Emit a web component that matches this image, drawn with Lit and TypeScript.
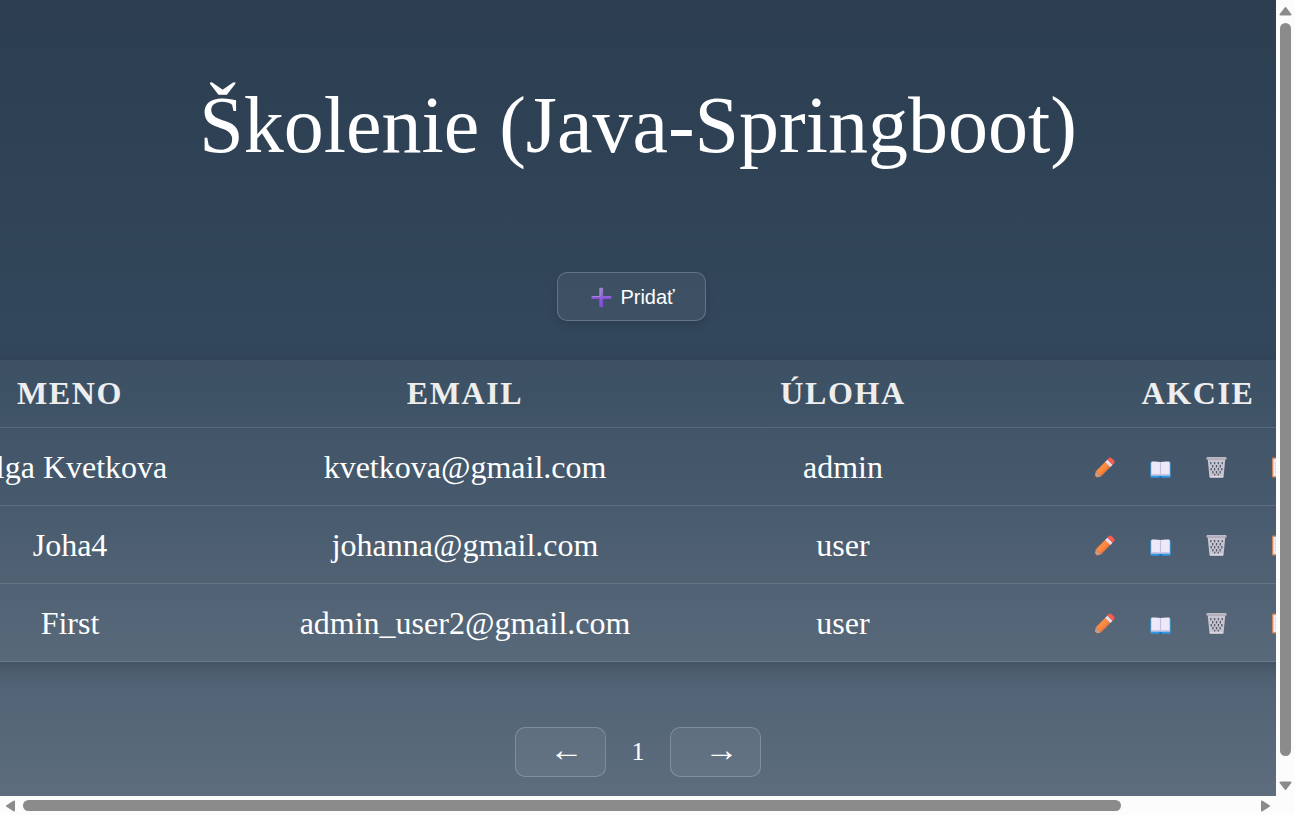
import { LitElement, html, css, svg } from "lit";
import { customElement, property } from "lit/decorators.js";

interface Person {
  name: string;
  email: string;
  role: string;
}

const people: Person[] = [
  { name: "Olga Kvetkova", email: "kvetkova@gmail.com", role: "admin" },
  { name: "Joha4", email: "johanna@gmail.com", role: "user" },
  { name: "First", email: "admin_user2@gmail.com", role: "user" },
];

const plus = svg`
  <defs><linearGradient id="p" x1="0" y1="0" x2="0" y2="1">
    <stop offset="0" stop-color="#9a86c4"/><stop offset="0.45" stop-color="#8f63d6"/><stop offset="1" stop-color="#7f4bd0"/>
  </linearGradient></defs>
  <path d="M9 .7h2.400q.7 0 .7.7v7.500h7.600q.7 0 .7.7v1.600q0 .7-.7.7h-7.600v7.700q0 .7-.7.7H9q-.7 0-.7-.7V11.900H1.200q-.7 0-.7-.7V9.600q0-.7.7-.7h7.100V1.400q0-.7.7-.7Z" fill="url(#p)"/>
  <path d="M9.200 1.500v8H1.500" fill="none" stroke="#a995d2" stroke-width=".7"/>
  <path d="M1.500 11.300h7.300M12 11.300h7.500M11.500 12v7" fill="none" stroke="#7f45dd" stroke-width=".9"/>`;

const pencil = svg`
  <defs><linearGradient id="w" x1="0" y1="0" x2="1" y2="1">
    <stop offset="0.25" stop-color="#f58a4c"/><stop offset="0.5" stop-color="#ff8b3c"/><stop offset="0.75" stop-color="#d8683f"/>
  </linearGradient></defs>
  <path d="M1.800 14.200 12 4l5.200 5.200L7 19.400Z" fill="url(#w)"/>
  <path d="M1.800 14.200 7 19.400 1.200 20.800q-.9 0-.6-1Z" fill="#c99a86"/>
  <path d="m.9 18.600 2 1.700-1.700.5q-1 0-.7-1Z" fill="#5d4148"/>
  <path d="m11.200 4.900 2.300-2.300 5.200 5.200-2.300 2.300Z" fill="#e3dcec"/>
  <path d="m13.400 2.600 1.900-1.900q1.100-.7 2.100.3l2.800 2.800q.9 1.100 0 2.100L18.400 7.700Z" fill="#ff5a4e"/>`;

const book = svg`
  <path d="M.5 5.500h20v14q0 1-1 1h-7.800l-1.200.6-1.200-.6H1.500q-1 0-1-1Z" fill="#3fb2f5"/>
  <path d="M1 19.300h19v1.100H1Z" fill="#248de4"/>
  <path d="M9.300 19.300h2.400v1.700H9.300Z" fill="#2263ae"/>
  <path d="M1.300 5.300q0-.7.8-.7 5-.4 8.400.5 3.400-.9 8.400-.5.800 0 .8.700V18.200H1.300Z" fill="#eee9f8"/>
  <path d="M1.300 17.200h8.200l1 .9 1-.9h8.200v1.400H1.300Z" fill="#c5b9dc"/>
  <path d="M10.500 5.100v13" stroke="#c9bedf" stroke-width="1.200"/>`;

const bin = svg`
  <path d="M1.700 2h17.600l-1.700 17.500q-.1 1.300-1.400 1.300H4.800q-1.300 0-1.400-1.300Z" fill="#c9c5d0"/>
  <path d="M4.800 5v2.200M8.600 5v2.200M12.400 5v2.200M16.200 5v2.200M6.700 8v2.400M10.500 8v2.400M14.300 8v2.400M5.200 11v2.400M8.600 11v2.400M12.400 11v2.400M15.800 11v2.400M6.900 14v2.400M10.500 14v2.400M14.100 14v2.400M8.700 16.800v1.600M12.300 16.800v1.600" stroke="#51596b" stroke-width="1.300"/>
  <path d="M.3 1q0-.7.8-.7h18.800q.8 0 .8.700v.9q0 .8-.8.8H1.100q-.8 0-.8-.8Z" fill="#aaa5b2"/>
  <path d="M1 .8h19" stroke="#dedae3" stroke-width=".8"/>
  <path d="M3.800 19.800h13.400" stroke="#dedae3" stroke-width="1.200"/>`;

const clipboard = svg`
  <rect x="0" y=".5" width="18" height="20" rx="1" fill="#cf8659"/>
  <path d="M1.300 1.800h15.400v17.400H1.300Z" fill="#efe8f5"/>
  <path d="M3.200 6h11M3.200 9h11M3.200 12h11M3.200 15h11" stroke="#b9aecb" stroke-width=".9"/>
  <path d="M4.500 .3h9v4h-9Z" fill="#8f8a9b"/>`;

@customElement("icon-button")
export class IconButton extends LitElement {
  @property() label = "";
  @property({ attribute: false }) icon: unknown;

  static styles = css`
    :host {
      display: flex;
      justify-content: center;
      width: 56px;
    }
    :host([wide]) {
      width: 76px;
    }
    button {
      display: flex;
      padding: 0;
      border: 0;
      background: none;
      cursor: pointer;
    }
    svg {
      width: 21px;
      height: 21px;
    }
  `;

  render() {
    return html`<button type="button" aria-label=${this.label}>
      <svg viewBox="0 0 21 21" aria-hidden="true">${this.icon}</svg>
    </button>`;
  }
}

@customElement("scroll-bar")
export class ScrollBar extends LitElement {
  @property({ type: Number }) size = 100;

  static styles = css`
    :host {
      display: flex;
      align-items: center;
      gap: 7px;
      padding: 0 5px;
      background: #fcfcfc;
    }
    :host([vertical]) {
      flex-direction: column;
      padding: 6px 0 5px;
    }
    .track {
      flex: 1;
      display: flex;
    }
    :host([vertical]) .track {
      flex-direction: column;
    }
    .thumb {
      min-width: 11px;
      min-height: 11px;
      border-radius: 6px;
      background: #8b8b8b;
    }
    svg {
      width: 11px;
      height: 12px;
      fill: #8b8b8b;
      stroke: #8b8b8b;
      stroke-width: 2;
      stroke-linejoin: round;
    }
    :host([vertical]) svg {
      width: 13px;
      height: 10px;
    }
  `;

  render() {
    const vertical = this.hasAttribute("vertical");
    const box = vertical ? "0 0 13 10" : "0 0 11 12";
    const start = vertical ? "M6.500 2 11.500 8.500h-10Z" : "M2 6 9 1.500v9Z";
    const end = vertical ? "M6.500 8 11.500 1.500h-10Z" : "M9 6 2 1.500v9Z";
    return html`
      <svg viewBox=${box}><path d=${start}></path></svg>
      <div class="track">
        <div class="thumb" style="flex-basis: ${this.size}%"></div>
      </div>
      <svg viewBox=${box}><path d=${end}></path></svg>
    `;
  }
}

@customElement("app-root")
export class AppRoot extends LitElement {
  static styles = css`
    :host {
      display: grid;
      grid-template: minmax(0, 1fr) 19px / minmax(0, 1fr) 19px;
      height: 100vh;
      overflow: hidden;
      background: #fcfcfc;
      color: #fff;
      font-family: "Liberation Serif", "Times New Roman", serif;
    }
    main {
      display: flex;
      flex-direction: column;
      align-items: center;
      overflow: hidden;
      background: linear-gradient(#2c3e50, #34495e 50%, #5d6d7e);
    }
    h1 {
      margin: 80px 0 102px;
      font-size: 80px;
      font-weight: 400;
      line-height: 90px;
      white-space: nowrap;
    }
    .btn {
      display: flex;
      align-items: center;
      box-sizing: border-box;
      border: 1px solid rgba(255, 255, 255, 0.2);
      border-radius: 10px;
      background: rgba(255, 255, 255, 0.06);
      color: #fff;
      cursor: pointer;
    }
    .add {
      gap: 8px;
      height: 49px;
      margin-right: 13px;
      padding: 2px 30px 0 33px;
      box-shadow: 0 4px 10px rgba(0, 0, 0, 0.12);
      font: 20px "Liberation Sans", Arial, sans-serif;
    }
    .add svg {
      width: 21px;
      height: 21px;
    }
    .wrap {
      align-self: stretch;
      margin-top: 39px;
    }
    table {
      width: 1500px;
      margin-left: -63px;
      border-collapse: separate;
      border-spacing: 0;
      table-layout: fixed;
      background: rgba(255, 255, 255, 0.05);
      box-shadow: 0 4px 20px rgba(0, 0, 0, 0.2);
      font-size: 32px;
      line-height: 37px;
      text-align: center;
    }
    .name {
      width: 266px;
    }
    .email {
      width: 524px;
    }
    .role {
      width: 232px;
    }
    th,
    td {
      padding: 21px 0 19px;
      border-bottom: 1px solid rgba(255, 255, 255, 0.12);
      white-space: nowrap;
    }
    th {
      padding: 15px 0;
      color: #eee;
      letter-spacing: 0.05em;
      text-transform: uppercase;
    }
    .actions {
      display: flex;
      justify-content: center;
    }
    nav {
      display: flex;
      align-items: center;
      margin-top: 65px;
      font-size: 26px;
    }
    .page {
      width: 64px;
      text-align: center;
    }
    .arrow {
      justify-content: center;
      width: 91px;
      height: 50px;
      padding: 0 0 4px 12px;
      font: inherit;
      font-size: 34px;
    }
  `;

  render() {
    return html`
      <main>
        <h1>Školenie (Java-Springboot)</h1>
        <button class="btn add" type="button">
          <svg viewBox="0 0 21 21" aria-hidden="true">${plus}</svg>Pridať
        </button>
        <div class="wrap">
          <table>
            <thead>
              <tr>
                <th class="name">Meno</th>
                <th class="email">Email</th>
                <th class="role">Úloha</th>
                <th>Akcie</th>
              </tr>
            </thead>
            <tbody>
              ${people.map(
                (p) => html`<tr>
                  <td>${p.name}</td>
                  <td>${p.email}</td>
                  <td>${p.role}</td>
                  <td>
                    <div class="actions">
                      <icon-button label="Upraviť" .icon=${pencil}></icon-button>
                      <icon-button label="Zobraziť" .icon=${book}></icon-button>
                      <icon-button label="Vymazať" .icon=${bin}></icon-button>
                      <icon-button wide label="Školenia" .icon=${clipboard}></icon-button>
                    </div>
                  </td>
                </tr>`
              )}
            </tbody>
          </table>
        </div>
        <nav aria-label="Stránkovanie">
          <button class="btn arrow" type="button">←</button>
          <span class="page">1</span>
          <button class="btn arrow" type="button">→</button>
        </nav>
      </main>
      <scroll-bar vertical size="97.6" aria-hidden="true"></scroll-bar>
      <scroll-bar size="89.3" aria-hidden="true"></scroll-bar>
    `;
  }
}
